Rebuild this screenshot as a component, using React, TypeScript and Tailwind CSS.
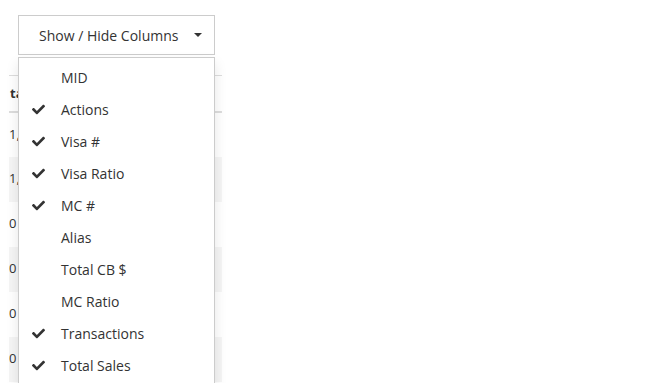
import { useState } from "react";

const columns = [
  { name: "MID", visible: false },
  { name: "Actions", visible: true },
  { name: "Visa #", visible: true },
  { name: "Visa Ratio", visible: true },
  { name: "MC #", visible: true },
  { name: "Alias", visible: false },
  { name: "Total CB $", visible: false },
  { name: "MC Ratio", visible: false },
  { name: "Transactions", visible: true },
  { name: "Total Sales", visible: true },
];

const rows = ["1,4", "1,7", "0", "0", "0", "0"];

function CheckIcon() {
  return (
    <svg viewBox="0 0 512 512" className="w-[13px] h-[13px]" fill="currentColor">
      <path d="M173.9 439.4l-166.4-166.4c-10-10-10-26.2 0-36.2l36.2-36.2c10-10 26.2-10 36.2 0L192 312.7 432.1 72.6c10-10 26.2-10 36.2 0l36.2 36.2c10 10 10 26.2 0 36.2l-294.4 294.4c-10 10-26.2 10-36.2 0z" />
    </svg>
  );
}

export default function App() {
  const [open, setOpen] = useState(true);
  const [cols, setCols] = useState(columns);

  const toggleCol = (i: number) => {
    setCols(prev => prev.map((c, idx) => idx === i ? { ...c, visible: !c.visible } : c));
  };

  return (
    <div className="w-full h-screen overflow-hidden bg-white text-[#333] font-['Open_Sans',sans-serif]">
      <div className="relative pt-[15px] pl-[18px]">
        <button
          onClick={() => setOpen(!open)}
          className="w-[197px] h-[40px] flex items-center border border-[#ccc] bg-white text-[14px] text-[#333] pl-[20px] pr-[12px]"
        >
          <span className="flex-1 text-left">Show / Hide Columns</span>
          <span className="w-0 h-0 border-l-[4px] border-r-[4px] border-t-[4px] border-l-transparent border-r-transparent border-t-[#333]" />
        </button>

        {open && (
          <ul className="absolute z-10 top-[57px] left-[18px] w-[197px] bg-white border border-[#ccc] pt-[3px] pb-[4px] shadow-[0_6px_12px_rgba(0,0,0,0.1)]">
            {cols.map((c, i) => (
              <li
                key={c.name}
                onClick={() => toggleCol(i)}
                className="h-[32px] flex items-center text-[14px] text-[#333] cursor-pointer"
              >
                <span className="w-[42px] pl-[13px] flex items-center text-[#333]">
                  {c.visible && <CheckIcon />}
                </span>
                <span>{c.name}</span>
              </li>
            ))}
          </ul>
        )}
      </div>

      <div className="pl-[9px] mt-[20px]">
        <table className="w-[213px] border-collapse text-[13px]">
          <thead>
            <tr className="h-[36px] border-t border-[#ddd] border-b-2">
              <th className="text-left font-bold px-[1px] align-middle">tal</th>
            </tr>
          </thead>
          <tbody>
            {rows.map((r, i) => (
              <tr key={i} className={`h-[45px] ${i % 2 === 1 ? "bg-[#f5f5f5]" : "bg-white"}`}>
                <td className="px-0 align-middle">{r}</td>
              </tr>
            ))}
          </tbody>
        </table>
      </div>
    </div>
  );
}
